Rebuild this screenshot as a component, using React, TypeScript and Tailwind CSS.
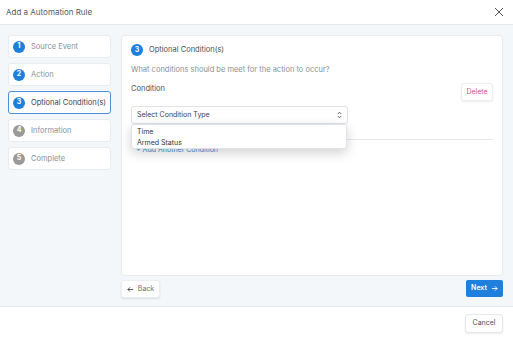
import React from "react";

const steps = [
  { n: 1, label: "Source Event", state: "done" },
  { n: 2, label: "Action", state: "done" },
  { n: 3, label: "Optional Condition(s)", state: "active" },
  { n: 4, label: "Information", state: "todo" },
  { n: 5, label: "Complete", state: "todo" },
];

export default function App() {
  return (
    <div className="w-[513px] h-[339px] bg-white flex flex-col font-['Inter',sans-serif] text-[#4a4f55] overflow-hidden">
      {/* Header */}
      <div className="h-[25px] shrink-0 border-b border-[#e3e7eb] flex items-center justify-between pl-[6px] pr-[9px]">
        <span className="text-[8px] text-[#555b61]">Add a Automation Rule</span>
        <svg width="10" height="10" viewBox="0 0 10 10" className="text-[#555]">
          <path d="M1 1L9 9M9 1L1 9" stroke="currentColor" strokeWidth="1" />
        </svg>
      </div>

      {/* Body */}
      <div className="h-[282px] shrink-0 bg-[#f4f7f9] border-b border-[#e3e7eb] flex pl-[8px] pr-[10px] pt-[10px]">
        {/* Sidebar */}
        <div className="w-[103px] flex flex-col gap-[5px]">
          {steps.map((s) => (
            <div
              key={s.n}
              className={
                s.state === "active"
                  ? "h-[23px] bg-white border border-[#4a90d9] rounded-[3px] flex items-center gap-[6px] pl-[4px]"
                  : "h-[23px] bg-white border border-[#e8ecef] rounded-[3px] flex items-center gap-[6px] pl-[4px]"
              }
            >
              <div
                className={
                  s.state === "todo"
                    ? "w-[12px] h-[12px] rounded-full bg-[#9a9a9a] text-white text-[7px] font-bold flex items-center justify-center"
                    : "w-[12px] h-[12px] rounded-full bg-[#1e7fdc] text-white text-[7px] font-bold flex items-center justify-center"
                }
              >
                {s.n}
              </div>
              <span
                className={
                  s.state === "active"
                    ? "text-[7.5px] text-[#3b4046]"
                    : "text-[7.5px] text-[#8a9097]"
                }
              >
                {s.label}
              </span>
            </div>
          ))}
        </div>

        {/* Main */}
        <div className="ml-[10px] flex-1 flex flex-col">
          <div className="h-[241px] bg-white border border-[#e8ecef] rounded-[3px] pl-[9px] pr-[9px] pt-[8px]">
            <div className="flex items-center gap-[6px]">
              <div className="w-[12px] h-[12px] rounded-full bg-[#1e7fdc] text-white text-[7px] font-bold flex items-center justify-center">
                3
              </div>
              <span className="text-[7.5px] text-[#4a4f55]">Optional Condition(s)</span>
            </div>
            <div className="mt-[8px] text-[7.5px] text-[#8a9097]">
              What conditions should be meet for the action to occur?
            </div>
            <div className="mt-[9px] flex items-start justify-between">
              <span className="text-[7.5px] text-[#4a4f55] mt-[-1px]">Condition</span>
              <div className="mt-[-1px] w-[32px] h-[18px] rounded-[3px] border border-[#eceff2] bg-white shadow-[0_1px_2px_rgba(0,0,0,0.08)] flex items-center justify-center text-[7px] text-[#d0507a]">
                Delete
              </div>
            </div>
            <div className="relative mt-[5px]">
              <div className="w-[217px] h-[18px] rounded-[3px] border border-[#dfe3e7] bg-white flex items-center justify-between pl-[5px] pr-[5px] text-[7px] text-[#3b4046]">
                <span>Select Condition Type</span>
                <svg width="5" height="8" viewBox="0 0 5 8">
                  <path d="M0.8 3L2.5 1.2L4.2 3M0.8 5L2.5 6.8L4.2 5" stroke="#555" strokeWidth="0.9" fill="none" />
                </svg>
              </div>
              <div className="mt-[15px] border-t border-[#e6e9ec]" />
              <div className="mt-[6px] pl-[5px] text-[7px] leading-[8px] text-[#3e8fd8]">+ Add Another Condition</div>
              <div className="absolute left-0 top-[18px] w-[216px] h-[25px] bg-white border border-[#dfe3e7] rounded-[3px] shadow-[0_4px_12px_rgba(0,0,0,0.18)] flex flex-col justify-center pl-[5px] gap-[2px] text-[7px] text-[#2f3338] leading-[9px]">
                <span>Time</span>
                <span>Armed Status</span>
              </div>
            </div>
          </div>

          <div className="mt-[4px] flex items-start justify-between">
            <div className="w-[39px] h-[18px] bg-white rounded-[3px] border border-[#eceff2] shadow-[0_1px_2px_rgba(0,0,0,0.1)] flex items-center justify-center gap-[4px] text-[7px] text-[#6a7077]">
              <svg width="7" height="7" viewBox="0 0 8 8">
                <path d="M7 4H1M3.5 1.5L1 4L3.5 6.5" stroke="#444" strokeWidth="1" fill="none" />
              </svg>
              <span>Back</span>
            </div>
            <div className="w-[37px] h-[17px] bg-[#1e7fdc] rounded-[2px] flex items-center justify-center gap-[4px] text-[7px] font-semibold text-white">
              <span>Next</span>
              <svg width="7" height="7" viewBox="0 0 8 8">
                <path d="M1 4H7M4.5 1.5L7 4L4.5 6.5" stroke="white" strokeWidth="1" fill="none" />
              </svg>
            </div>
          </div>
        </div>
      </div>

      {/* Footer */}
      <div className="flex-1 flex items-center justify-end pr-[10px]">
        <div className="w-[38px] h-[19px] bg-white rounded-[3px] border border-[#e6e9ec] shadow-[0_1px_2px_rgba(0,0,0,0.08)] flex items-center justify-center text-[7px] text-[#4a4f55]">
          Cancel
        </div>
      </div>
    </div>
  );
}
